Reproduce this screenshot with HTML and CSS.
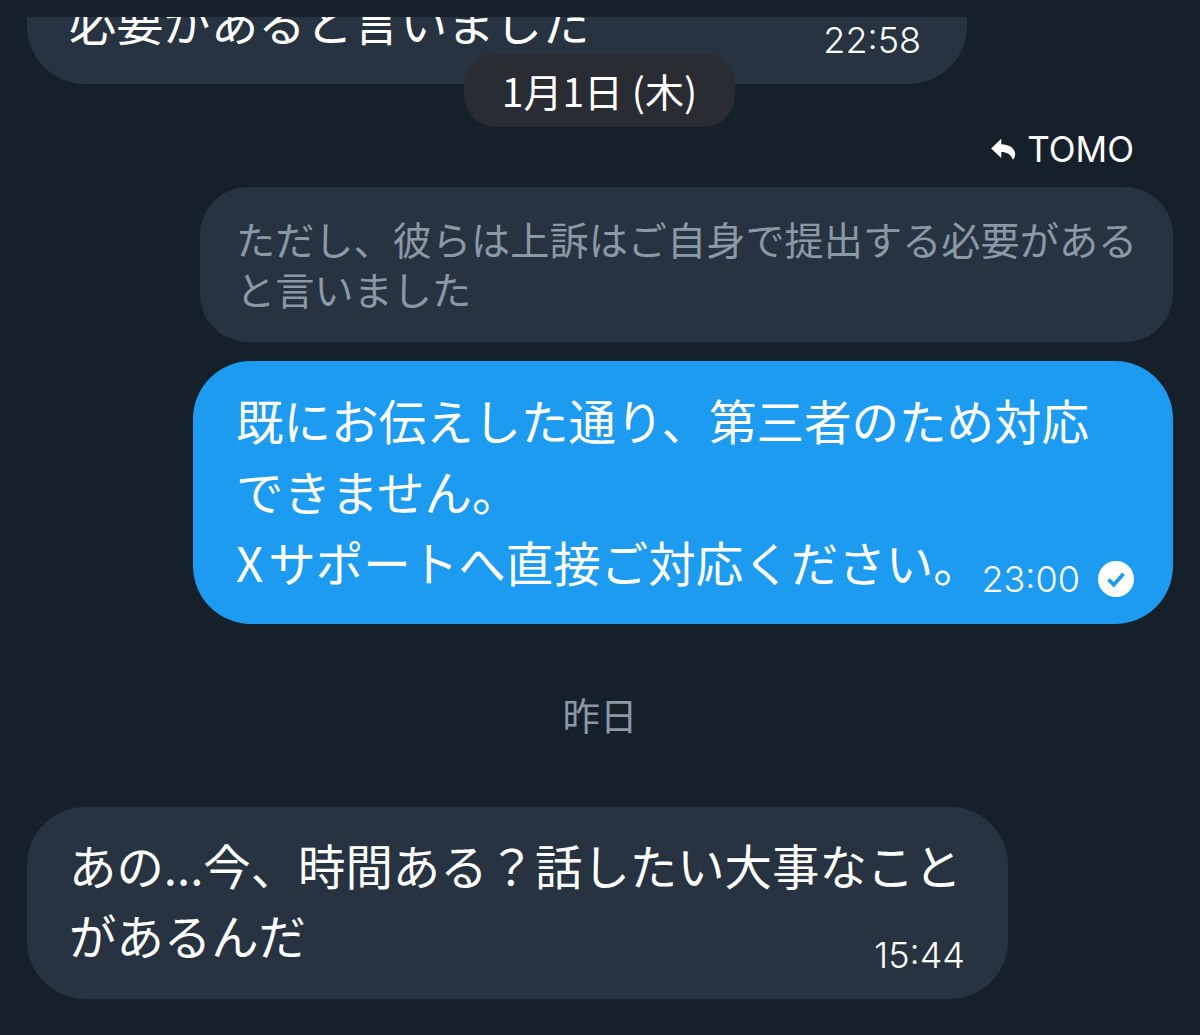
FILE: index.html
```html
<!DOCTYPE html>
<html lang="ja">
<head>
    <meta charset="UTF-8">
    <meta name="viewport" content="width=device-width, initial-scale=1.0">
    <title>メッセージ</title>
    <link rel="stylesheet" href="styles.css">
</head>
<body>
    <div class="topbar"></div>
    <main class="thread">
        <div class="bubble bubble-in bubble-cut">
            <p class="cut-text">必要があると言いました</p>
            <span class="time time-cut">22:58</span>
        </div>
        <div class="date-pill">1月1日 (木)</div>

        <div class="reply-to">
            <svg class="reply-icon" viewBox="0 0 24 24" aria-hidden="true">
                <path d="M10 2.500 1 11l9 8.500v-5.300c4.800 0 8.200 1.800 10.500 6.800 1.700-1.600 2.200-4 1.700-6.300-1-4.500-5.400-7.200-12.200-7.400z"/>
            </svg>
            <span>TOMO</span>
        </div>
        <div class="quote">ただし、彼らは上訴はご自身で提出する必要があると言いました</div>
        <div class="bubble bubble-out">
            <p>既にお伝えした通り、第三者のため対応できません。<br><span class="wide-x">X</span>サポートへ直接ご対応ください。</p>
            <div class="meta">
                <span class="time">23:00</span>
                <svg class="read-icon" viewBox="0 0 36 36" aria-hidden="true">
                    <circle cx="18" cy="18" r="18" fill="#fff"/>
                    <path d="M10.500 18.500l5.300 5.300 9.700-11" fill="none" stroke="#1d9bf0" stroke-width="3.600"/>
                </svg>
            </div>
        </div>

        <div class="day-label">昨日</div>

        <div class="bubble bubble-in bubble-last">
            <p>あの...今、時間ある？話したい大事なこと</p>
            <p class="last-line">があるんだ</p>
            <span class="time time-last">15:44</span>
        </div>
    </main>
</body>
</html>
```

FILE: styles.css
```css
* {
    box-sizing: border-box;
}
html, body {
    margin: 0;
    height: 1035px;
    overflow: hidden;
}
body {
    background-color: #15202b;
    color: #fff;
    font-family: "Noto Sans CJK JP", "Inter", sans-serif;
}
p {
    margin: 0;
}
.topbar {
    height: 17px;
    background-color: #17222c;
}
.thread {
    display: flex;
    flex-direction: column;
    padding: 0 27px 0 27px;
}
.bubble {
    position: relative;
    color: #fff;
}
.bubble-in {
    background-color: #273340;
}
.bubble-cut {
    width: 940px;
    height: 67px;
    border-radius: 0 0 58px 58px;
    overflow: hidden;
    font-size: 47.300px;
    line-height: 70px;
}
.cut-text {
    margin: -31px 0 0 42px;
}
.time {
    font-family: "Inter", "Liberation Sans", sans-serif;
    font-size: 36px;
    font-weight: 300;
    line-height: 40px;
}
.time-cut {
    position: absolute;
    top: 3px;
    right: 46px;
}
.date-pill {
    align-self: center;
    margin: -31px 0 0 -1px;
    position: relative;
    width: 271px;
    height: 74px;
    border-radius: 32px;
    background-color: #292d33;
    font-size: 39px;
    line-height: 74px;
    text-align: center;
}
.reply-to {
    align-self: flex-end;
    display: flex;
    align-items: center;
    gap: 10px;
    margin: 0 39px 0 0;
    height: 44px;
    font-family: "Inter", "Liberation Sans", sans-serif;
    font-size: 35px;
}
.reply-icon {
    width: 27px;
    height: 27px;
    fill: #fff;
}
.quote {
    align-self: flex-end;
    width: 973px;
    height: 155px;
    margin-top: 16px;
    padding: 26px 34px 0 36px;
    border-radius: 48px;
    background-color: #273340;
    color: #8b98a5;
    font-size: 39.200px;
    line-height: 50px;
}
.bubble-out {
    align-self: flex-end;
    width: 980px;
    height: 263px;
    margin-top: 19px;
    padding: 23px 40px 0 43px;
    border-radius: 58px;
    background-color: #1d9bf0;
    font-size: 47.500px;
    line-height: 71px;
}
.wide-x {
    letter-spacing: 5px;
}
.meta {
    position: absolute;
    right: 39px;
    bottom: 25px;
    display: flex;
    align-items: center;
    gap: 18px;
}
.read-icon {
    width: 36px;
    height: 36px;
}
.day-label {
    margin-top: 63px;
    height: 54px;
    color: #8b98a5;
    font-size: 37.500px;
    line-height: 54px;
    text-align: center;
}
.bubble-last {
    width: 981px;
    height: 192px;
    margin-top: 66px;
    padding: 23px 44px 0 42px;
    border-radius: 58px;
    font-size: 47.400px;
    line-height: 70px;
}
.last-line {
    width: fit-content;
}
.time-last {
    position: absolute;
    right: 43px;
    bottom: 24px;
}
```
